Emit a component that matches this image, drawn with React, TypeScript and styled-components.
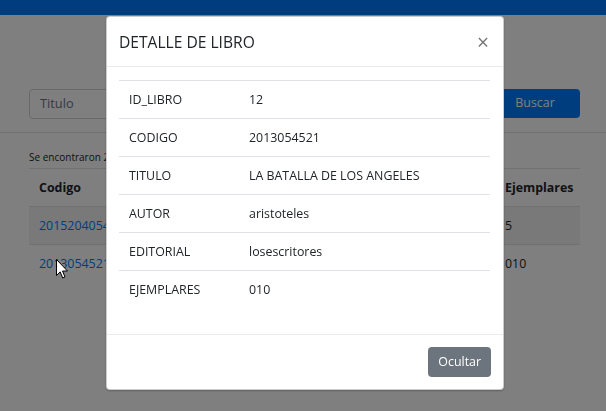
import React from "react";
import styled, { createGlobalStyle } from "styled-components";

const Global = createGlobalStyle`
  html, body { margin: 0; padding: 0; background: #fff; }
  body {
    font-family: "Open Sans", "Noto Sans", Arial, sans-serif;
    font-size: 12.4px;
    line-height: 1.5;
    color: #212529;
    width: 606px;
    height: 411px;
    overflow: hidden;
  }
  * { box-sizing: border-box; }
`;

const Page = styled.div`
  width: 606px;
  height: 411px;
  overflow: hidden;
`;

const Navbar = styled.div`
  height: 15px;
  background: #0079fc;
`;

const SearchSection = styled.div`
  padding: 74px 26px 13px 29px;
  border-bottom: 1px solid #dee2e6;
`;

const SearchRow = styled.div`
  display: flex;
  gap: 12px;
`;

const Input = styled.div`
  flex: 1;
  height: 30px;
  border: 1px solid #ced4da;
  border-radius: 4px;
  padding: 0 10px;
  display: flex;
  align-items: center;
  color: #6c757d;
  font-size: 12.8px;
`;

const BlueButton = styled.div`
  width: 90px;
  height: 29px;
  background: #007bff;
  color: #fff;
  border-radius: 4px;
  display: flex;
  align-items: center;
  justify-content: center;
`;

const Results = styled.div`
  padding: 17px 26px 0 29px;
`;

const Found = styled.div`
  font-size: 10px;
  line-height: 15px;
  margin-bottom: 3px;
`;

const Table = styled.table`
  width: 100%;
  border-collapse: collapse;
  table-layout: fixed;
`;

const Th = styled.th<{ $w?: number }>`
  text-align: left;
  font-weight: 700;
  padding: 9px 10px;
  line-height: 19px;
  border-top: 1px solid #dee2e6;
  border-bottom: 1px solid #dee2e6;
  white-space: nowrap;
  overflow: hidden;
  width: ${(p) => (p.$w ? `${p.$w}px` : "auto")};
`;

const Tr = styled.tr<{ $striped?: boolean }>`
  background: ${(p) => (p.$striped ? "rgba(0,0,0,0.05)" : "transparent")};
`;

const Td = styled.td`
  padding: 9px 10px;
  line-height: 19px;
  border-top: 1px solid #dee2e6;
  white-space: nowrap;
  overflow: hidden;
`;

const Link = styled.span`
  color: #007bff;
`;

const Backdrop = styled.div`
  position: fixed;
  inset: 0;
  background: rgba(0, 0, 0, 0.5);
`;

const ModalLayer = styled.div`
  position: fixed;
  inset: 0;
  padding: 16px 0 0 106px;
`;

const Dialog = styled.div`
  width: 398px;
  background: #fff;
  border: 1px solid rgba(0, 0, 0, 0.2);
  border-radius: 4px;
  box-shadow: 0 1px 2px rgba(0, 0, 0, 0.25);
`;

const Header = styled.div`
  display: flex;
  align-items: center;
  justify-content: space-between;
  padding: 13px 13px 12px 12px;
  border-bottom: 1px solid #e9ecef;
`;

const Title = styled.h5`
  margin: 0;
  font-size: 15.6px;
  font-weight: 400;
  line-height: 24px;
  color: #212529;
`;

const Close = styled.span`
  font-size: 21px;
  font-weight: 400;
  line-height: 1;
  color: #000;
  opacity: 0.55;
  margin-right: 1px;
`;

const Body = styled.div`
  padding: 13px 13px 26px 12px;
`;

const DetailTable = styled.table`
  width: 100%;
  border-collapse: collapse;
  table-layout: fixed;
`;

const DetailLabel = styled.td`
  width: 120px;
  padding: 9px 10px;
  line-height: 19px;
  border-top: 1px solid #dee2e6;
`;

const DetailValue = styled.td`
  padding: 9px 10px;
  line-height: 19px;
  border-top: 1px solid #dee2e6;
`;

const Footer = styled.div`
  display: flex;
  justify-content: flex-end;
  padding: 12px 12px 12px 13px;
  border-top: 1px solid #e9ecef;
`;

const GrayButton = styled.div`
  height: 30px;
  padding: 0 10px;
  background: #6c757d;
  color: #fff;
  border-radius: 4px;
  display: flex;
  align-items: center;
`;

const Cursor = styled.svg`
  position: fixed;
  left: 56px;
  top: 259px;
`;

const details: [string, string][] = [
  ["ID_LIBRO", "12"],
  ["CODIGO", "2013054521"],
  ["TITULO", "LA BATALLA DE LOS ANGELES"],
  ["AUTOR", "aristoteles"],
  ["EDITORIAL", "losescritores"],
  ["EJEMPLARES", "010"],
];

export default function App() {
  return (
    <>
      <Global />
      <Page>
        <Navbar />
        <SearchSection>
          <SearchRow>
            <Input>Titulo</Input>
            <BlueButton>Buscar</BlueButton>
          </SearchRow>
        </SearchSection>
        <Results>
          <Found>Se encontraron 2 resultados</Found>
          <Table>
            <thead>
              <tr>
                <Th $w={100}>Codigo</Th>
                <Th $w={170}>Titulo</Th>
                <Th $w={96}>Autor</Th>
                <Th $w={100}>Editorial</Th>
                <Th>Ejemplares</Th>
              </tr>
            </thead>
            <tbody>
              <Tr $striped>
                <Td><Link>2015204054</Link></Td>
                <Td>EL PRINCIPITO</Td>
                <Td>antoine</Td>
                <Td>planeta</Td>
                <Td>5</Td>
              </Tr>
              <Tr>
                <Td><Link>2013054521</Link></Td>
                <Td>LA BATALLA</Td>
                <Td>aristoteles</Td>
                <Td>escritores</Td>
                <Td>010</Td>
              </Tr>
            </tbody>
          </Table>
        </Results>
      </Page>
      <Backdrop />
      <ModalLayer>
        <Dialog>
          <Header>
            <Title>DETALLE DE LIBRO</Title>
            <Close>×</Close>
          </Header>
          <Body>
            <DetailTable>
              <tbody>
                {details.map(([k, v]) => (
                  <tr key={k}>
                    <DetailLabel>{k}</DetailLabel>
                    <DetailValue>{v}</DetailValue>
                  </tr>
                ))}
              </tbody>
            </DetailTable>
          </Body>
          <Footer>
            <GrayButton>Ocultar</GrayButton>
          </Footer>
        </Dialog>
      </ModalLayer>
      <Cursor width="13" height="21" viewBox="0 0 13 21">
        <path
          d="M0.5 0.5 L0.5 16.5 L4.2 12.9 L6.7 19 L9 18 L6.5 12 L11.5 12 Z"
          fill="#fff"
          stroke="#000"
          strokeWidth="1"
          strokeLinejoin="miter"
        />
      </Cursor>
    </>
  );
}
